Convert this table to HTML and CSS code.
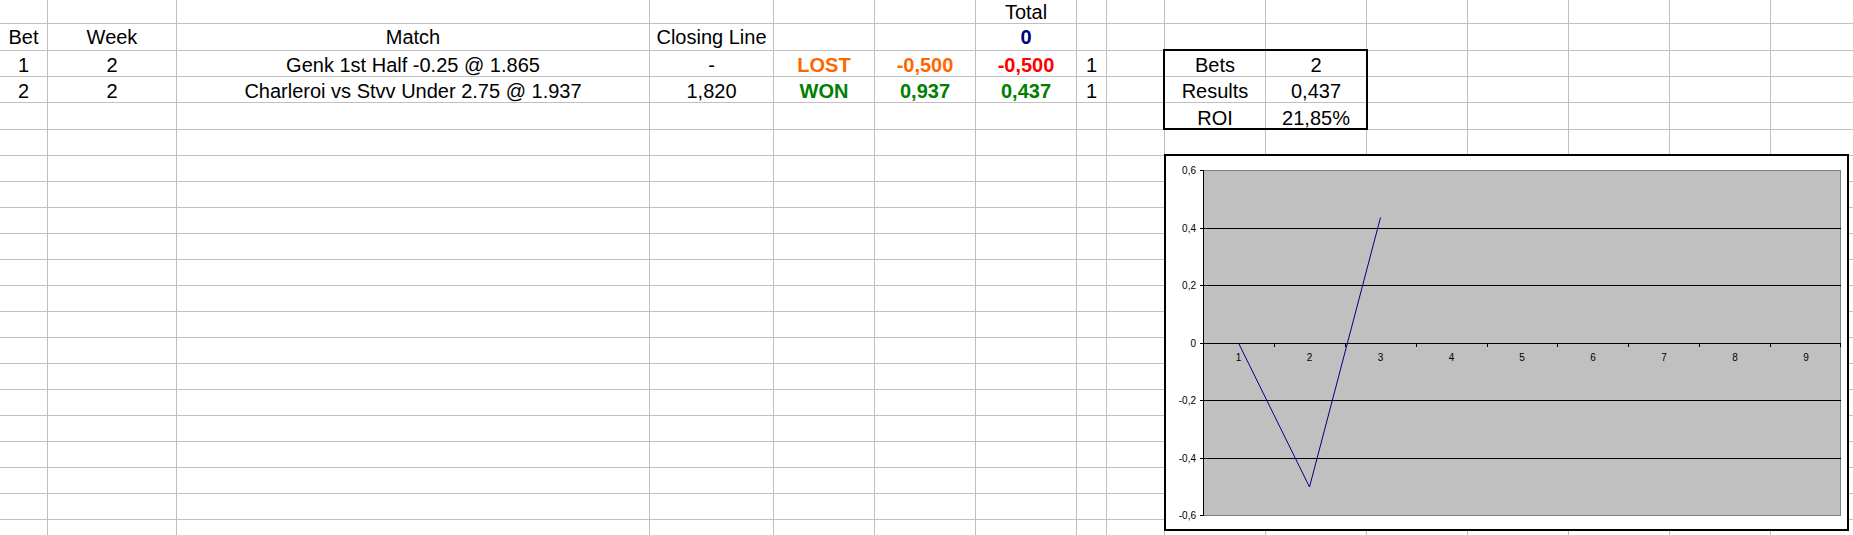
FILE: index.html
```html
<!DOCTYPE html>
<html>
<head>
<meta charset="utf-8">
<title>Bets sheet</title>
<link rel="stylesheet" href="styles.css">
</head>
<body>
<div class="sheet">
<div class="c"></div><div class="c"></div><div class="c"></div><div class="c"></div><div class="c"></div><div class="c"></div><div class="c">Total</div><div class="c"></div><div class="c"></div><div class="c"></div><div class="c"></div><div class="c"></div><div class="c"></div><div class="c"></div><div class="c"></div><div class="c"></div>
<div class="c h">Bet</div><div class="c h">Week</div><div class="c h">Match</div><div class="c h">Closing Line</div><div class="c"></div><div class="c"></div><div class="c h b navy">0</div><div class="c"></div><div class="c"></div><div class="c"></div><div class="c"></div><div class="c"></div><div class="c"></div><div class="c"></div><div class="c"></div><div class="c"></div>
<div class="c">1</div><div class="c">2</div><div class="c">Genk 1st Half -0.25 @ 1.865</div><div class="c">-</div><div class="c b orange">LOST</div><div class="c b orange">-0,500</div><div class="c b red">-0,500</div><div class="c">1</div><div class="c"></div><div class="c">Bets</div><div class="c">2</div><div class="c"></div><div class="c"></div><div class="c"></div><div class="c"></div><div class="c"></div>
<div class="c">2</div><div class="c">2</div><div class="c">Charleroi vs Stvv Under 2.75 @ 1.937</div><div class="c">1,820</div><div class="c b green">WON</div><div class="c b green">0,937</div><div class="c b green">0,437</div><div class="c">1</div><div class="c"></div><div class="c">Results</div><div class="c">0,437</div><div class="c"></div><div class="c"></div><div class="c"></div><div class="c"></div><div class="c"></div>
<div class="c"></div><div class="c"></div><div class="c"></div><div class="c"></div><div class="c"></div><div class="c"></div><div class="c"></div><div class="c"></div><div class="c"></div><div class="c">ROI</div><div class="c">21,85%</div><div class="c"></div><div class="c"></div><div class="c"></div><div class="c"></div><div class="c"></div>
<div class="c"></div><div class="c"></div><div class="c"></div><div class="c"></div><div class="c"></div><div class="c"></div><div class="c"></div><div class="c"></div><div class="c"></div><div class="c"></div><div class="c"></div><div class="c"></div><div class="c"></div><div class="c"></div><div class="c"></div><div class="c"></div>
<div class="c"></div><div class="c"></div><div class="c"></div><div class="c"></div><div class="c"></div><div class="c"></div><div class="c"></div><div class="c"></div><div class="c"></div><div class="c"></div><div class="c"></div><div class="c"></div><div class="c"></div><div class="c"></div><div class="c"></div><div class="c"></div>
<div class="c"></div><div class="c"></div><div class="c"></div><div class="c"></div><div class="c"></div><div class="c"></div><div class="c"></div><div class="c"></div><div class="c"></div><div class="c"></div><div class="c"></div><div class="c"></div><div class="c"></div><div class="c"></div><div class="c"></div><div class="c"></div>
<div class="c"></div><div class="c"></div><div class="c"></div><div class="c"></div><div class="c"></div><div class="c"></div><div class="c"></div><div class="c"></div><div class="c"></div><div class="c"></div><div class="c"></div><div class="c"></div><div class="c"></div><div class="c"></div><div class="c"></div><div class="c"></div>
<div class="c"></div><div class="c"></div><div class="c"></div><div class="c"></div><div class="c"></div><div class="c"></div><div class="c"></div><div class="c"></div><div class="c"></div><div class="c"></div><div class="c"></div><div class="c"></div><div class="c"></div><div class="c"></div><div class="c"></div><div class="c"></div>
<div class="c"></div><div class="c"></div><div class="c"></div><div class="c"></div><div class="c"></div><div class="c"></div><div class="c"></div><div class="c"></div><div class="c"></div><div class="c"></div><div class="c"></div><div class="c"></div><div class="c"></div><div class="c"></div><div class="c"></div><div class="c"></div>
<div class="c"></div><div class="c"></div><div class="c"></div><div class="c"></div><div class="c"></div><div class="c"></div><div class="c"></div><div class="c"></div><div class="c"></div><div class="c"></div><div class="c"></div><div class="c"></div><div class="c"></div><div class="c"></div><div class="c"></div><div class="c"></div>
<div class="c"></div><div class="c"></div><div class="c"></div><div class="c"></div><div class="c"></div><div class="c"></div><div class="c"></div><div class="c"></div><div class="c"></div><div class="c"></div><div class="c"></div><div class="c"></div><div class="c"></div><div class="c"></div><div class="c"></div><div class="c"></div>
<div class="c"></div><div class="c"></div><div class="c"></div><div class="c"></div><div class="c"></div><div class="c"></div><div class="c"></div><div class="c"></div><div class="c"></div><div class="c"></div><div class="c"></div><div class="c"></div><div class="c"></div><div class="c"></div><div class="c"></div><div class="c"></div>
<div class="c"></div><div class="c"></div><div class="c"></div><div class="c"></div><div class="c"></div><div class="c"></div><div class="c"></div><div class="c"></div><div class="c"></div><div class="c"></div><div class="c"></div><div class="c"></div><div class="c"></div><div class="c"></div><div class="c"></div><div class="c"></div>
<div class="c"></div><div class="c"></div><div class="c"></div><div class="c"></div><div class="c"></div><div class="c"></div><div class="c"></div><div class="c"></div><div class="c"></div><div class="c"></div><div class="c"></div><div class="c"></div><div class="c"></div><div class="c"></div><div class="c"></div><div class="c"></div>
<div class="c"></div><div class="c"></div><div class="c"></div><div class="c"></div><div class="c"></div><div class="c"></div><div class="c"></div><div class="c"></div><div class="c"></div><div class="c"></div><div class="c"></div><div class="c"></div><div class="c"></div><div class="c"></div><div class="c"></div><div class="c"></div>
<div class="c"></div><div class="c"></div><div class="c"></div><div class="c"></div><div class="c"></div><div class="c"></div><div class="c"></div><div class="c"></div><div class="c"></div><div class="c"></div><div class="c"></div><div class="c"></div><div class="c"></div><div class="c"></div><div class="c"></div><div class="c"></div>
<div class="c"></div><div class="c"></div><div class="c"></div><div class="c"></div><div class="c"></div><div class="c"></div><div class="c"></div><div class="c"></div><div class="c"></div><div class="c"></div><div class="c"></div><div class="c"></div><div class="c"></div><div class="c"></div><div class="c"></div><div class="c"></div>
<div class="c"></div><div class="c"></div><div class="c"></div><div class="c"></div><div class="c"></div><div class="c"></div><div class="c"></div><div class="c"></div><div class="c"></div><div class="c"></div><div class="c"></div><div class="c"></div><div class="c"></div><div class="c"></div><div class="c"></div><div class="c"></div>
<div class="c"></div><div class="c"></div><div class="c"></div><div class="c"></div><div class="c"></div><div class="c"></div><div class="c"></div><div class="c"></div><div class="c"></div><div class="c"></div><div class="c"></div><div class="c"></div><div class="c"></div><div class="c"></div><div class="c"></div><div class="c"></div>

<div class="summary-box"></div>

<div class="chart">
<svg width="681" height="373" viewBox="1166 156 681 373" xmlns="http://www.w3.org/2000/svg">
  <rect x="1203.5" y="170.5" width="637" height="345" fill="#c0c0c0" stroke="#808080" stroke-width="1"/>
  <path d="M1203 228.5H1841M1203 285.5H1841M1203 400.5H1841M1203 458.5H1841" stroke="#000" stroke-width="1" fill="none"/>
  <path d="M1203 343.5H1841" stroke="#000" stroke-width="1"/>
  <path d="M1203.5 170V516" stroke="#000" stroke-width="1"/>
  <path d="M1200 170.5H1203M1200 228.5H1203M1200 285.5H1203M1200 343.5H1203M1200 400.5H1203M1200 458.5H1203M1200 515.5H1203" stroke="#000" stroke-width="1"/>
  <path d="M1274.5 343V347M1345.5 343V347M1416.5 343V347M1487.5 343V347M1557.5 343V347M1628.5 343V347M1699.5 343V347M1770.5 343V347M1840.5 343V347" stroke="#000" stroke-width="1"/>
  <polyline points="1238.5,343 1309.5,487 1380.5,217.5" fill="none" stroke="#000080" stroke-width="1"/>
  <g class="ylab" text-anchor="end">
    <text x="1196" y="174">0,6</text>
    <text x="1196" y="232">0,4</text>
    <text x="1196" y="289">0,2</text>
    <text x="1196" y="347">0</text>
    <text x="1196" y="404">-0,2</text>
    <text x="1196" y="462">-0,4</text>
    <text x="1196" y="519">-0,6</text>
  </g>
  <g class="xlab" text-anchor="middle">
    <text x="1238.5" y="361">1</text>
    <text x="1309.5" y="361">2</text>
    <text x="1380.5" y="361">3</text>
    <text x="1451.5" y="361">4</text>
    <text x="1522" y="361">5</text>
    <text x="1593" y="361">6</text>
    <text x="1664" y="361">7</text>
    <text x="1735" y="361">8</text>
    <text x="1806" y="361">9</text>
  </g>
</svg>
</div>
</div>
</body>
</html>
```

FILE: styles.css
```css
html, body {
  margin: 0;
  padding: 0;
  background: #ffffff;
  overflow: hidden;
}

body {
  font-family: "Liberation Sans", Arial, sans-serif;
  color: #000000;
}

.sheet {
  position: relative;
  display: grid;
  grid-template-columns: 48px 129px 473px 124px 101px 101px 101px 30px 58px repeat(7, 101px);
  grid-template-rows: 24px 27px 26px 26px 27px repeat(16, 26px);
  width: 1872px;
}

.c {
  box-sizing: border-box;
  border-right: 1px solid #c0c0c0;
  border-bottom: 1px solid #c0c0c0;
  display: flex;
  align-items: flex-end;
  justify-content: center;
  font-size: 20px;
  line-height: 22px;
  white-space: nowrap;
  min-width: 0;
}

.h {
  padding-bottom: 2px;
}

.b {
  font-weight: bold;
}

.navy { color: #000080; }
.orange { color: #ff6600; }
.red { color: #ff0000; }
.green { color: #008000; }

.summary-box {
  position: absolute;
  grid-column: 10 / 12;
  grid-row: 3 / 6;
  top: -2px;
  left: -2px;
  right: -1px;
  bottom: 0;
  border: 2px solid #000000;
  pointer-events: none;
}

.chart {
  position: absolute;
  left: 1164px;
  top: 154px;
  width: 685px;
  height: 377px;
  box-sizing: border-box;
  border: 2px solid #000000;
  background: #ffffff;
}

.chart svg {
  display: block;
}

.chart text {
  font-family: "Liberation Sans", Arial, sans-serif;
  font-size: 10px;
  fill: #000000;
}
```
